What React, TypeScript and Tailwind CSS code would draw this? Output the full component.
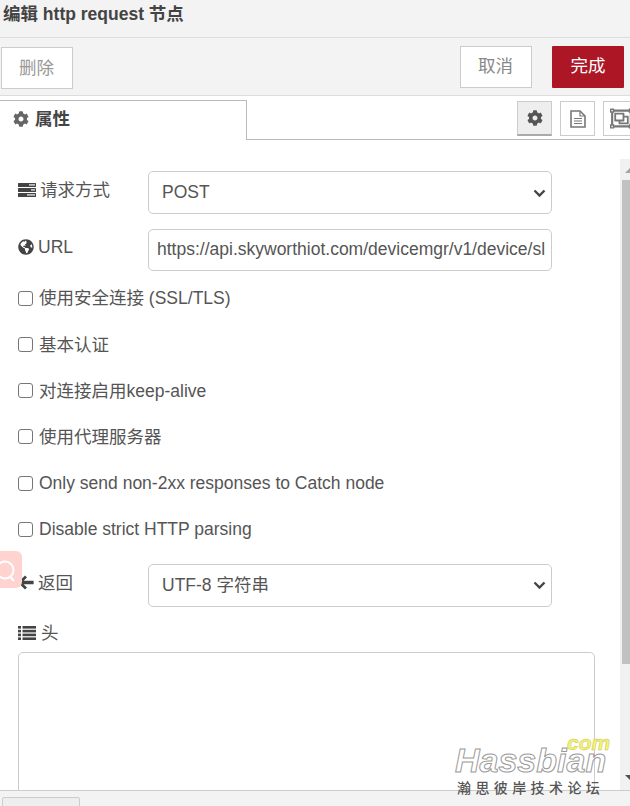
import React from 'react';
import { FaCog, FaGlobeAmericas, FaRegObjectGroup } from 'react-icons/fa';

const checks = [
  '使用安全连接 (SSL/TLS)',
  '基本认证',
  '对连接启用keep-alive',
  '使用代理服务器',
  'Only send non-2xx responses to Catch node',
  'Disable strict HTTP parsing',
];

function SelectBox({ value, lift }: { value: string; lift?: boolean }) {
  return (
    <div className="w-[404px] h-[43px] ml-[130px] flex items-center justify-between bg-white border border-[#ccc] rounded-[5px] pl-[13px] pr-[4px] text-[#555]">
      <span className={lift ? '-mt-[2px]' : ''}>{value}</span>
      <svg width="13" height="9" viewBox="0 0 13 9" className="mr-[1px] mt-[1px]">
        <path d="M1.5 1.5 6.5 6.5 11.5 1.5" fill="none" stroke="#444" strokeWidth="2.4" />
      </svg>
    </div>
  );
}

function TasksIcon() {
  return (
    <svg width="18" height="14" viewBox="0 0 18 14" className="shrink-0">
      <rect x="0" y="0" width="18" height="4" rx="0.6" fill="#444" />
      <rect x="0" y="5" width="18" height="4" rx="0.6" fill="#444" />
      <rect x="0" y="10" width="18" height="4" rx="0.6" fill="#444" />
      <rect x="11" y="1.2" width="6" height="1.4" fill="#ddd" />
      <rect x="13" y="6.2" width="4" height="1.4" fill="#ddd" />
      <rect x="9" y="11.2" width="8" height="1.4" fill="#ddd" />
    </svg>
  );
}

function ListIcon() {
  return (
    <svg width="18" height="14" viewBox="0 0 18 14" fill="#444" className="shrink-0">
      <rect x="0" y="0" width="3" height="2.6" />
      <rect x="4.5" y="0" width="13.5" height="2.6" />
      <rect x="0" y="3.8" width="3" height="2.6" />
      <rect x="4.5" y="3.8" width="13.5" height="2.6" />
      <rect x="0" y="7.6" width="3" height="2.6" />
      <rect x="4.5" y="7.6" width="13.5" height="2.6" />
      <rect x="0" y="11.4" width="3" height="2.6" />
      <rect x="4.5" y="11.4" width="13.5" height="2.6" />
    </svg>
  );
}

function BackIcon() {
  return (
    <svg width="16" height="15" viewBox="0 0 16 15" fill="#444" className="shrink-0">
      <path d="M7 0.4 9 2.4 5.6 5.7H15.6V9.3H5.6L9 12.6 7 14.6 0 7.5Z" />
    </svg>
  );
}

function DocIcon() {
  return (
    <svg width="16" height="18" viewBox="0 0 16 18" fill="none" stroke="#777" className="shrink-0">
      <path d="M1 1H10L15 6V17H1Z" strokeWidth="1.6" />
      <path d="M10 1V6H15" strokeWidth="1.2" />
      <path d="M4 8.5H12M4 11H12M4 13.5H12" strokeWidth="1.2" />
    </svg>
  );
}

export default function App() {
  return (
    <div className="relative w-[630px] h-[806px] overflow-hidden bg-white text-[17.5px] leading-[24px] text-[#555] font-['Liberation_Sans','Noto_Sans_CJK_SC',sans-serif]">
      <div className="h-[38px] bg-[#f3f3f3] border-b border-[#ddd] pl-[3px] pt-[2px] font-bold text-[#444]">
        编辑 http request 节点
      </div>

      <div className="h-[58px] bg-[#f3f3f3] border-b border-[#ddd] flex items-center justify-between pl-[1px]">
        <button className="w-[72px] h-[42px] bg-white border border-[#ccc] text-[#999] mt-[2px] pr-[1px]">删除</button>
        <div className="flex gap-[20px] mt-[1px]">
          <button className="w-[72px] h-[42px] pb-[2px] pr-[1px] bg-white border border-[#ccc] text-[#888]">取消</button>
          <button className="w-[72px] h-[42px] pb-[2px] mr-[6px] bg-[#ad1625] text-white rounded-[1px]">完成</button>
        </div>
      </div>

      <div className="h-[44px] flex items-end justify-between border-b border-[#bbb]">
        <div className="w-[247px] h-[40px] -mb-[1px] bg-white border-t border-r border-[#bbb] flex items-center gap-[6px] pl-[13px] pb-[3px] font-bold text-[#444]">
          <FaCog className="w-[16px] h-[16px] text-[#666]" />
          属性
        </div>
        <div className="flex gap-[8px] mb-[3px] -mr-[8px]">
          <div className="w-[35px] h-[35px] bg-[#eee] border border-[#ccc] border-b-[2px] border-b-[#aaa] flex items-center justify-center">
            <FaCog className="w-[16px] h-[16px] text-[#555]" />
          </div>
          <div className="w-[35px] h-[35px] bg-white border border-[#ccc] flex items-center justify-center">
            <DocIcon />
          </div>
          <div className="w-[35px] h-[35px] bg-white border border-[#ccc] flex items-center justify-center pl-[2px]">
            <FaRegObjectGroup className="w-[23px] h-[23px] shrink-0 text-[#777]" />
          </div>
        </div>
      </div>

      <div className="h-[650px] flex">
        <div className="w-[620px] shrink-0 pl-[18px] pt-[31px]">
          <div className="relative">
            <div className="absolute left-0 top-[7px] flex items-center gap-[4px]">
              <TasksIcon />
              请求方式
            </div>
            <SelectBox value="POST" lift />
          </div>

          <div className="relative mt-[15px]">
            <div className="absolute left-0 top-[6px] flex items-center gap-[4px]">
              <FaGlobeAmericas className="w-[16px] h-[16px] text-[#444]" />
              URL
            </div>
            <div className="w-[404px] h-[42px] ml-[130px] pb-[2px] flex items-center bg-white border border-[#ccc] rounded-[5px] pl-[8px] overflow-hidden whitespace-nowrap">
              https://api.skyworthiot.com/devicemgr/v1/device/sl
            </div>
          </div>

          <div className="mt-[15.4px] flex flex-col gap-[22.2px]">
            {checks.map((label) => (
              <div key={label} className="flex items-center gap-[6px] h-[24px]">
                <span className="w-[15px] h-[15px] shrink-0 bg-white border border-[#767676] rounded-[3px]" />
                {label}
              </div>
            ))}
          </div>

          <div className="relative mt-[22.6px]">
            <div className="absolute left-0 top-[7px] flex items-center gap-[4px]">
              <BackIcon />
              返回
            </div>
            <SelectBox value="UTF-8 字符串" />
          </div>

          <div className="mt-[14px] flex items-center gap-[5px] h-[24px]">
            <ListIcon />
            头
          </div>
          <div className="mt-[7px] w-[577px] h-[150px] bg-white border border-[#ccc] rounded-[5px]" />
        </div>

        <div className="w-[17px] shrink-0 mt-[19px] bg-[#f1f1f1] flex flex-col pl-[2px]">
          <div className="h-[21px] flex justify-center pt-[9px]">
            <span className="w-0 h-0 border-x-[5px] border-x-transparent border-b-[5px] border-b-[#a3a3a3]" />
          </div>
          <div className="h-[484px] bg-[#c1c1c1]" />
          <div className="mt-[111px] flex justify-center">
            <span className="w-0 h-0 border-x-[5px] border-x-transparent border-t-[5px] border-t-[#505050]" />
          </div>
        </div>
      </div>

      <div className="absolute left-0 bottom-0 w-full h-[16px] bg-[#f3f3f3] border-t border-[#ccc]">
        <div className="ml-[2px] mt-[6px] w-[78px] h-[12px] bg-[#eee] border border-[#ccc] rounded-[2px]" />
      </div>

      {/* page overlays from the original capture */}
      <div className="absolute left-0 top-[551px] w-[22px] h-[37px] bg-[#ffd3d0] rounded-r-[6px] overflow-hidden">
        <svg width="22" height="37" viewBox="0 0 22 37" fill="none" stroke="#fff" strokeWidth="2">
          <circle cx="5" cy="19" r="8.5" />
          <path d="M10.5 26l3.5 4" />
        </svg>
      </div>
      <div className="absolute left-[455px] top-[733px] w-[160px] h-[70px] pointer-events-none">
        <span className="absolute left-[112px] top-[0px] italic font-bold text-[21px] leading-[20px] text-[#f4f27a] [-webkit-text-stroke:0.5px_#c9c640]">com</span>
        <span className="absolute left-0 top-[9px] italic font-bold text-[34px] leading-[36px] text-white/70 [-webkit-text-stroke:1px_#999]">Hassbian</span>
        <span className="absolute left-[2px] top-[45px] whitespace-nowrap text-[14px] leading-[20px] font-medium tracking-[4.4px] text-[#555]">瀚思彼岸技术论坛</span>
      </div>
    </div>
  );
}
